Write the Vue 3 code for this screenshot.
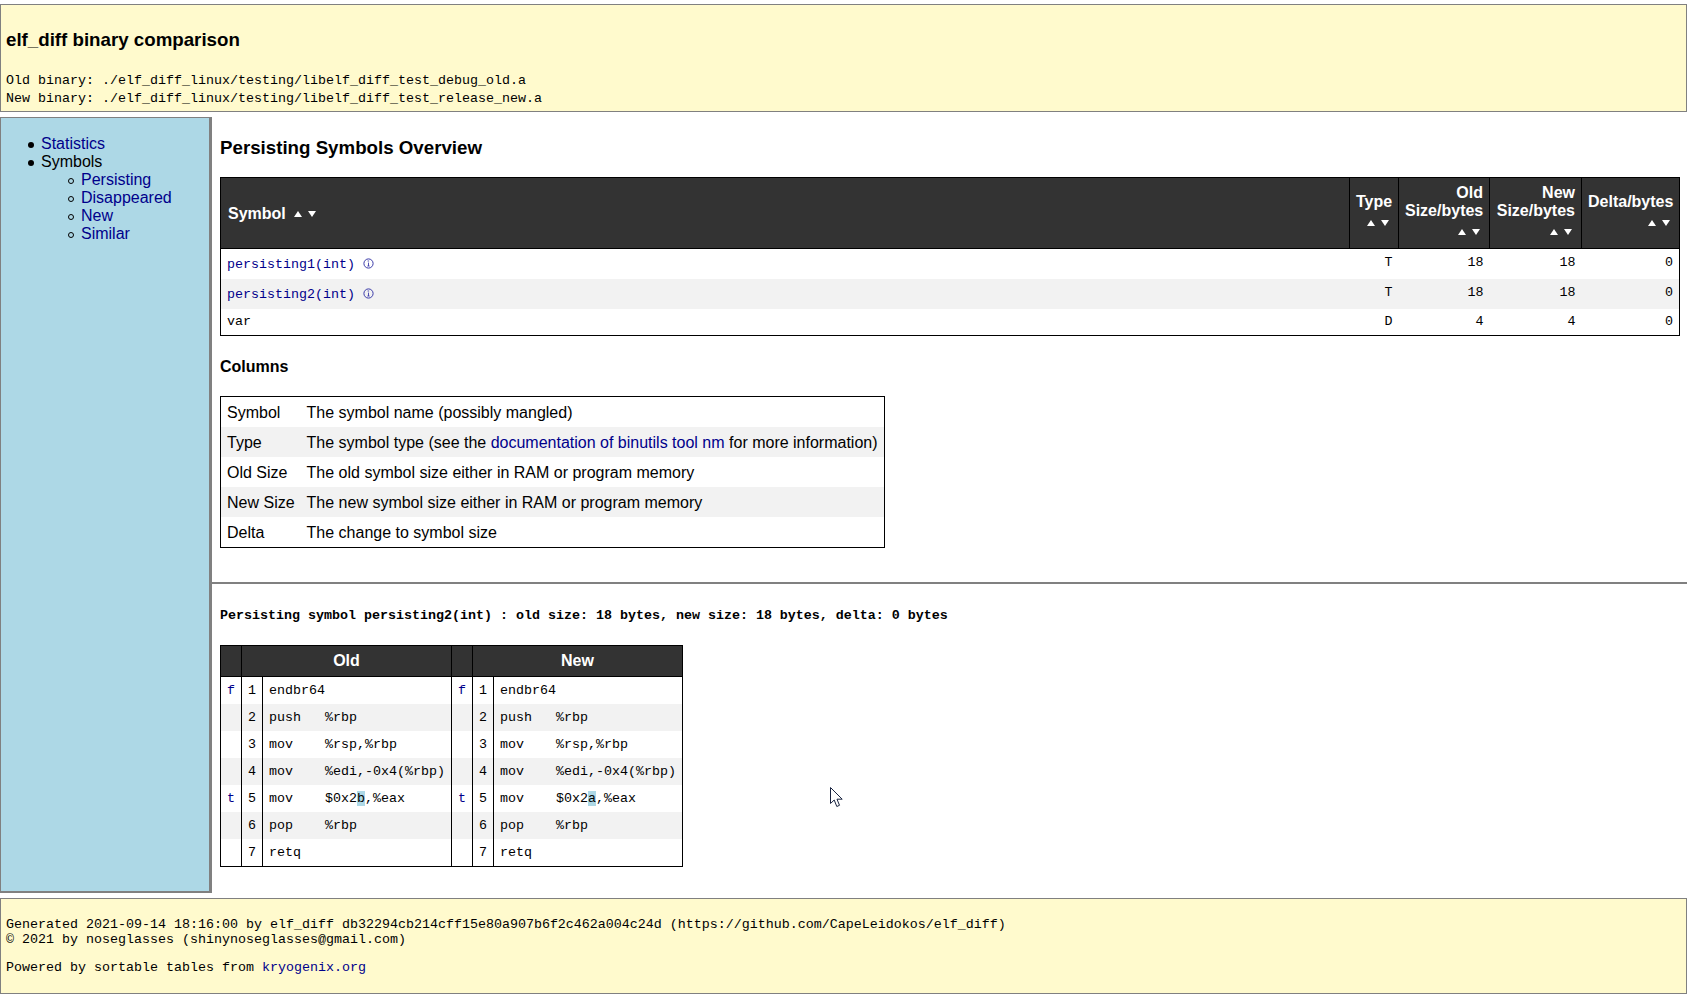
<script setup>
const symbols = [
  { name: 'persisting1(int)', link: true, type: 'T', old: 18, new: 18, delta: 0 },
  { name: 'persisting2(int)', link: true, type: 'T', old: 18, new: 18, delta: 0 },
  { name: 'var', link: false, type: 'D', old: 4, new: 4, delta: 0 },
]
const sortCols = [
  { lines: ['Type'], w: 'w-type' },
  { lines: ['Old', 'Size/bytes'], w: 'w-old' },
  { lines: ['New', 'Size/bytes'], w: 'w-new' },
  { lines: ['Delta/bytes'], w: 'w-delta' },
]
const columns = [
  ['Symbol', 'The symbol name (possibly mangled)'],
  ['Type', null],
  ['Old Size', 'The old symbol size either in RAM or program memory'],
  ['New Size', 'The new symbol size either in RAM or program memory'],
  ['Delta', 'The change to symbol size'],
]
const diff = [
  { m: 'f', n: 1, o: ['endbr64'], w: ['endbr64'] },
  { m: '', n: 2, o: ['push   %rbp'], w: ['push   %rbp'] },
  { m: '', n: 3, o: ['mov    %rsp,%rbp'], w: ['mov    %rsp,%rbp'] },
  { m: '', n: 4, o: ['mov    %edi,-0x4(%rbp)'], w: ['mov    %edi,-0x4(%rbp)'] },
  { m: 't', n: 5, o: ['mov    $0x2', 'b', ',%eax'], w: ['mov    $0x2', 'a', ',%eax'] },
  { m: '', n: 6, o: ['pop    %rbp'], w: ['pop    %rbp'] },
  { m: '', n: 7, o: ['retq'], w: ['retq'] },
]
</script>

<template>
  <div class="page">
    <header class="banner">
      <h1>elf_diff binary comparison</h1>
      <p>Old binary: ./elf_diff_linux/testing/libelf_diff_test_debug_old.a</p>
      <p>New binary: ./elf_diff_linux/testing/libelf_diff_test_release_new.a</p>
    </header>

    <div class="middle">
      <nav class="side">
        <ul>
          <li><a href="#">Statistics</a></li>
          <li>Symbols
            <ul>
              <li><a href="#">Persisting</a></li>
              <li><a href="#">Disappeared</a></li>
              <li><a href="#">New</a></li>
              <li><a href="#">Similar</a></li>
            </ul>
          </li>
        </ul>
      </nav>

      <main class="content">
        <section class="overview">
          <h2>Persisting Symbols Overview</h2>
          <table class="symbols">
            <thead>
              <tr>
                <th class="left">Symbol<span class="sort inline"><i class="up"></i><i class="down"></i></span></th>
                <th v-for="c in sortCols" :key="c.w" :class="c.w">
                  <span v-for="l in c.lines" :key="l" class="hl">{{ l }}</span>
                  <span class="sort"><i class="up"></i><i class="down"></i></span>
                </th>
              </tr>
            </thead>
            <tbody>
              <tr v-for="s in symbols" :key="s.name" :class="{ tall: s.link }">
                <td class="left">
                  <template v-if="s.link">
                    <a href="#">{{ s.name }}</a>
                    <svg class="info" width="11" height="11" viewBox="0 0 11 11">
                      <circle cx="5.5" cy="5.5" r="4.6" fill="none" stroke="#3a3aa8" stroke-width="1" />
                      <path d="M4.6 3h1.5M5.5 4.6v3.4M4.4 8h2.2" fill="none" stroke="#3a3aa8" stroke-width="0.9" />
                    </svg>
                  </template>
                  <template v-else>{{ s.name }}</template>
                </td>
                <td>{{ s.type }}</td>
                <td>{{ s.old }}</td>
                <td>{{ s.new }}</td>
                <td>{{ s.delta }}</td>
              </tr>
            </tbody>
          </table>

          <h4>Columns</h4>
          <table class="legend">
            <tbody>
              <tr v-for="c in columns" :key="c[0]">
                <td class="nm">{{ c[0] }}</td>
                <td v-if="c[1]">{{ c[1] }}</td>
                <td v-else>The symbol type (see the <a href="#">documentation of binutils tool nm</a> for more information)</td>
              </tr>
            </tbody>
          </table>
        </section>

        <hr />

        <section class="detail">
          <p class="dtitle">Persisting symbol persisting2(int) : old size: 18 bytes, new size: 18 bytes, delta: 0 bytes</p>
          <table class="diff">
            <colgroup>
              <col class="cn" />
              <col class="cn" />
              <col class="cc" />
              <col class="cn" />
              <col class="cn" />
              <col class="cd" />
            </colgroup>
            <thead>
              <tr>
                <th></th>
                <th colspan="2">Old</th>
                <th></th>
                <th colspan="2">New</th>
              </tr>
            </thead>
            <tbody>
              <tr v-for="r in diff" :key="r.n">
                <td class="ctr mk">{{ r.m }}</td>
                <td class="ctr">{{ r.n }}</td>
                <td class="code"><template v-for="(p, i) in r.o" :key="i"><span v-if="i === 1" class="hi">{{ p }}</span><template v-else>{{ p }}</template></template></td>
                <td class="ctr mk">{{ r.m }}</td>
                <td class="ctr">{{ r.n }}</td>
                <td class="code"><template v-for="(p, i) in r.w" :key="i"><span v-if="i === 1" class="hi">{{ p }}</span><template v-else>{{ p }}</template></template></td>
              </tr>
            </tbody>
          </table>
        </section>
      </main>
    </div>

    <footer class="foot">
      <p>Generated 2021-09-14 18:16:00 by elf_diff db32294cb214cff15e80a907b6f2c462a004c24d (https://github.com/CapeLeidokos/elf_diff)</p>
      <p>© 2021 by noseglasses (shinynoseglasses@gmail.com)</p>
      <p class="powered">Powered by sortable tables from <a href="#">kryogenix.org</a></p>
    </footer>

    <svg class="cursor" width="14" height="21" viewBox="0 0 14 21">
      <path d="M0.5 0.5V16.5L4.2 13L6.8 19.5L9.5 18.3L7 12.2H12.2Z" fill="#fff" stroke="#1a2440" stroke-width="1" />
    </svg>
  </div>
</template>

<style scoped>
.page {
  position: relative;
  width: 1687px;
  padding-top: 4px;
  font-family: "Liberation Sans", Arial, sans-serif;
  font-size: 16px;
  line-height: 18px;
  color: #000;
}
a { color: #00008b; text-decoration: none; }
p { margin: 0; }

.banner {
  box-sizing: border-box;
  height: 108px;
  padding: 24px 5px 0;
  background: #fffacd;
  border: 1px solid #808080;
  font-family: "Liberation Mono", "Courier New", monospace;
  font-size: 13.33px;
}
.banner h1 {
  margin: 0 0 22px;
  font-family: "Liberation Sans", Arial, sans-serif;
  font-size: 18.72px;
  line-height: 21px;
  font-weight: bold;
}

.middle {
  display: flex;
  margin-top: 5px;
  height: 776px;
}
.side {
  box-sizing: border-box;
  width: 212px;
  flex: none;
  background: #add8e6;
  border: 1px solid #808080;
  border-right-width: 3px;
  border-bottom-width: 2px;
}
.side ul { margin: 0; padding-left: 40px; list-style: none; }
.side > ul { margin-top: 17px; }
.side li { position: relative; }
.side li::before {
  content: "";
  position: absolute;
  left: -13px;
  top: 7px;
  width: 6px;
  height: 6px;
  border-radius: 50%;
  background: #000;
}
.side li li::before {
  box-sizing: border-box;
  background: transparent;
  border: 1px solid #000;
}

.content { flex: 1; min-width: 0; }
.overview { padding: 20px 7px 34px 8px; }
.overview h2 {
  margin: 0 0 19px;
  font-size: 18.72px;
  line-height: 21px;
  font-weight: bold;
}
.overview h4 {
  margin: 22px 0 20px;
  font-size: 16px;
  line-height: 18px;
  font-weight: bold;
}

table { border-collapse: collapse; border: 1px solid #000; }
th { background: #333; color: #fff; font-weight: bold; border: 1px solid #000; }

.symbols { width: 100%; table-layout: fixed; }
.symbols th {
  height: 71px;
  box-sizing: border-box;
  padding: 5px 6px 9px;
  text-align: right;
  vertical-align: middle;
}
.symbols th.left { text-align: left; padding: 8px 6px 6px 7px; }
.hl { display: block; }
.w-type { width: 49px; }
.w-old { width: 91px; }
.w-new { width: 92px; }
.w-delta { width: 98px; }
.sort {
  display: flex;
  justify-content: flex-end;
  gap: 6px;
  padding: 5px 3px 0 0;
  height: 19px;
  box-sizing: border-box;
  align-items: center;
}
.sort.inline {
  display: inline-flex;
  padding: 0;
  height: 18px;
  margin-left: 8px;
  vertical-align: middle;
}
.sort i { display: block; width: 0; height: 0; border-left: 4px solid transparent; border-right: 4px solid transparent; }
.sort .up { border-bottom: 6px solid #fff; }
.sort .down { border-top: 6px solid #fff; }

.symbols td {
  box-sizing: border-box;
  padding: 0 6px;
  height: 27px;
  text-align: right;
  font-family: "Liberation Mono", "Courier New", monospace;
  font-size: 13.33px;
  line-height: 15px;
}
.symbols tr.tall td { height: 30px; padding-bottom: 2px; }
.symbols tr.tall td.left { padding: 2px 6px 0; }
.symbols td.left { text-align: left; }
.symbols tbody tr:nth-child(even) td { background: #f2f2f2; }
.info { margin-left: 8px; vertical-align: -1px; }

.legend { width: 664px; }
.legend td { height: 30px; padding: 2px 6px 0; white-space: nowrap; box-sizing: border-box; }
.legend tr:last-child td { height: 31px; }
.legend td.nm { width: 68px; }
.legend tr:nth-child(even) td { background: #f2f2f2; }

hr { margin: 0; border: 0; height: 2px; background: #808080; }

.detail { padding: 24px 8px 0; }
.dtitle {
  font-family: "Liberation Mono", "Courier New", monospace;
  font-size: 13.33px;
  line-height: 15px;
  font-weight: bold;
  margin-bottom: 22px;
}
.diff { width: 462px; table-layout: fixed; }
.cn { width: 21px; }
.cc { width: 189px; }
.cd { width: 189px; }
.diff th { height: 31px; padding: 0; box-sizing: border-box; text-align: center; }
.diff td {
  height: 27px;
  padding: 0;
  border-right: 1px solid #000;
  font-family: "Liberation Mono", "Courier New", monospace;
  font-size: 13.33px;
  line-height: 15px;
  white-space: pre;
}
.diff tbody tr:nth-child(even) td { background: #f2f2f2; }
.diff td.ctr { text-align: center; }
.diff td.code { padding-left: 6px; }
.diff td.mk { color: #00008b; }
.hi { background: #add8e6; }

.foot {
  box-sizing: border-box;
  height: 96px;
  margin-top: 5px;
  padding: 18px 5px 0;
  background: #fffacd;
  border: 1px solid #808080;
  font-family: "Liberation Mono", "Courier New", monospace;
  font-size: 13.33px;
  line-height: 15px;
}
.powered { margin-top: 13px; }

.cursor { position: absolute; left: 830px; top: 787px; }
</style>
